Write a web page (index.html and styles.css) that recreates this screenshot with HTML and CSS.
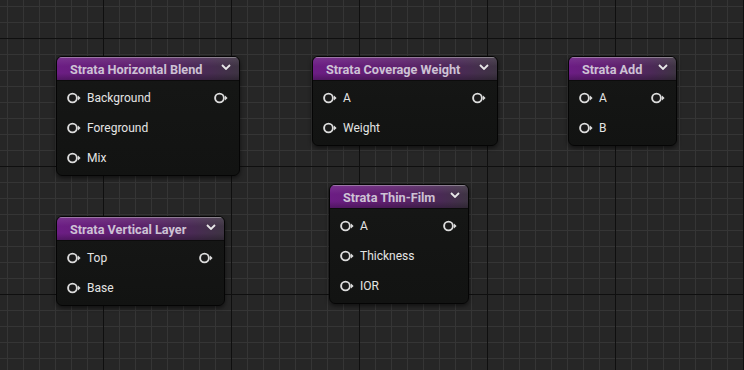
FILE: index.html
```html
<!DOCTYPE html>
<html>
<head>
<meta charset="utf-8">
<link rel="stylesheet" href="styles.css">
</head>
<body>
<div class="graph">
  <div class="node n-hblend">
    <div class="hdr"><span class="title">Strata Horizontal Blend</span><svg class="chev" viewBox="0 0 10 6"><path d="M1 1 L5 5 L9 1" /></svg></div>
    <div class="body">
      <div class="row"><div class="pin-in"><svg class="pin" viewBox="0 0 14 12"><circle cx="5.5" cy="6" r="4.4"/><polygon points="11,3.6 13.6,6 11,8.4"/></svg><span>Background</span></div><svg class="pin" viewBox="0 0 14 12"><circle cx="5.5" cy="6" r="4.4"/><polygon points="11,3.6 13.6,6 11,8.4"/></svg></div>
      <div class="row"><div class="pin-in"><svg class="pin" viewBox="0 0 14 12"><circle cx="5.5" cy="6" r="4.4"/><polygon points="11,3.6 13.6,6 11,8.4"/></svg><span>Foreground</span></div></div>
      <div class="row"><div class="pin-in"><svg class="pin" viewBox="0 0 14 12"><circle cx="5.5" cy="6" r="4.4"/><polygon points="11,3.6 13.6,6 11,8.4"/></svg><span>Mix</span></div></div>
    </div>
  </div>

  <div class="node n-cov">
    <div class="hdr"><span class="title">Strata Coverage Weight</span><svg class="chev" viewBox="0 0 10 6"><path d="M1 1 L5 5 L9 1" /></svg></div>
    <div class="body">
      <div class="row"><div class="pin-in"><svg class="pin" viewBox="0 0 14 12"><circle cx="5.5" cy="6" r="4.4"/><polygon points="11,3.6 13.6,6 11,8.4"/></svg><span>A</span></div><svg class="pin" viewBox="0 0 14 12"><circle cx="5.5" cy="6" r="4.4"/><polygon points="11,3.6 13.6,6 11,8.4"/></svg></div>
      <div class="row"><div class="pin-in"><svg class="pin" viewBox="0 0 14 12"><circle cx="5.5" cy="6" r="4.4"/><polygon points="11,3.6 13.6,6 11,8.4"/></svg><span>Weight</span></div></div>
    </div>
  </div>

  <div class="node n-add">
    <div class="hdr"><span class="title">Strata Add</span><svg class="chev" viewBox="0 0 10 6"><path d="M1 1 L5 5 L9 1" /></svg></div>
    <div class="body">
      <div class="row"><div class="pin-in"><svg class="pin" viewBox="0 0 14 12"><circle cx="5.5" cy="6" r="4.4"/><polygon points="11,3.6 13.6,6 11,8.4"/></svg><span>A</span></div><svg class="pin" viewBox="0 0 14 12"><circle cx="5.5" cy="6" r="4.4"/><polygon points="11,3.6 13.6,6 11,8.4"/></svg></div>
      <div class="row"><div class="pin-in"><svg class="pin" viewBox="0 0 14 12"><circle cx="5.5" cy="6" r="4.4"/><polygon points="11,3.6 13.6,6 11,8.4"/></svg><span>B</span></div></div>
    </div>
  </div>

  <div class="node n-vlayer">
    <div class="hdr"><span class="title">Strata Vertical Layer</span><svg class="chev" viewBox="0 0 10 6"><path d="M1 1 L5 5 L9 1" /></svg></div>
    <div class="body">
      <div class="row"><div class="pin-in"><svg class="pin" viewBox="0 0 14 12"><circle cx="5.5" cy="6" r="4.4"/><polygon points="11,3.6 13.6,6 11,8.4"/></svg><span>Top</span></div><svg class="pin" viewBox="0 0 14 12"><circle cx="5.5" cy="6" r="4.4"/><polygon points="11,3.6 13.6,6 11,8.4"/></svg></div>
      <div class="row"><div class="pin-in"><svg class="pin" viewBox="0 0 14 12"><circle cx="5.5" cy="6" r="4.4"/><polygon points="11,3.6 13.6,6 11,8.4"/></svg><span>Base</span></div></div>
    </div>
  </div>

  <div class="node n-thin">
    <div class="hdr"><span class="title">Strata Thin-Film</span><svg class="chev" viewBox="0 0 10 6"><path d="M1 1 L5 5 L9 1" /></svg></div>
    <div class="body">
      <div class="row"><div class="pin-in"><svg class="pin" viewBox="0 0 14 12"><circle cx="5.5" cy="6" r="4.4"/><polygon points="11,3.6 13.6,6 11,8.4"/></svg><span>A</span></div><svg class="pin" viewBox="0 0 14 12"><circle cx="5.5" cy="6" r="4.4"/><polygon points="11,3.6 13.6,6 11,8.4"/></svg></div>
      <div class="row"><div class="pin-in"><svg class="pin" viewBox="0 0 14 12"><circle cx="5.5" cy="6" r="4.4"/><polygon points="11,3.6 13.6,6 11,8.4"/></svg><span>Thickness</span></div></div>
      <div class="row"><div class="pin-in"><svg class="pin" viewBox="0 0 14 12"><circle cx="5.5" cy="6" r="4.4"/><polygon points="11,3.6 13.6,6 11,8.4"/></svg><span>IOR</span></div></div>
    </div>
  </div>
</div>
</body>
</html>
```

FILE: styles.css
```css
html, body {
  margin: 0;
  padding: 0;
}
body {
  width: 744px;
  height: 370px;
  overflow: hidden;
  font-family: Roboto, "Liberation Sans", sans-serif;
  background-color: #262626;
  background-image:
    linear-gradient(to right, #0f0f0f 1px, transparent 1px),
    linear-gradient(to bottom, #0f0f0f 1px, transparent 1px),
    linear-gradient(to right, #353535 1px, transparent 1px),
    linear-gradient(to bottom, #353535 1px, transparent 1px);
  background-size: 128px 128px, 128px 128px, 16px 16px, 16px 16px;
  background-position: 103px 0, 0 38px, 7px 0, 0 6px;
}
.graph {
  position: relative;
  width: 744px;
  height: 370px;
}
.node {
  position: absolute;
  box-sizing: border-box;
  display: flex;
  flex-direction: column;
  border: 1px solid #050505;
  border-radius: 6px;
  background: linear-gradient(to bottom, #161716, #121312);
  box-shadow: 0 2px 4px rgba(0, 0, 0, 0.55);
  overflow: hidden;
}
.n-hblend { left: 56px; top: 56px; width: 184px; }
.n-cov { left: 312px; top: 56px; width: 186px; }
.n-add { left: 568px; top: 56px; width: 109px; }
.n-vlayer { left: 56px; top: 216px; width: 169px; }
.n-thin { left: 329px; top: 184px; width: 140px; }

.hdr {
  height: 23px;
  display: flex;
  align-items: center;
  justify-content: space-between;
  padding: 0 8px 0 13px;
  background:
    linear-gradient(to bottom, rgba(255,255,255,0.10), rgba(255,255,255,0) 40%, rgba(0,0,0,0) 70%, rgba(0,0,0,0.25)),
    linear-gradient(to right, #6c1d84 0%, #60216f 45%, #4a2a55 80%, #3e3443 100%);
  box-shadow: inset 0 1px 0 rgba(200, 200, 200, 0.45);
  border-bottom: 1px solid #0c0c0c;
}
.title {
  font-weight: 700;
  font-size: 12.7px;
  color: #cdc2d4;
  white-space: nowrap;
  margin-top: 1px;
}
.chev {
  width: 10px;
  height: 6px;
  fill: none;
  stroke: #e8e8e8;
  stroke-width: 1.8;
  margin-bottom: 3px;
}
.body {
  padding: 2px 0 2px;
  display: flex;
  flex-direction: column;
}
.row {
  height: 30px;
  display: flex;
  align-items: center;
  justify-content: space-between;
  padding: 0 11px 0 10px;
}
.pin-in {
  display: flex;
  align-items: center;
  gap: 6px;
  font-size: 12px;
  color: #e4e4e4;
}
.pin {
  width: 14px;
  height: 12px;
  flex: none;
}
.pin circle {
  fill: #1a1a1a;
  stroke: #dcdcdc;
  stroke-width: 1.9;
}
.pin polygon {
  fill: #dcdcdc;
}
```
